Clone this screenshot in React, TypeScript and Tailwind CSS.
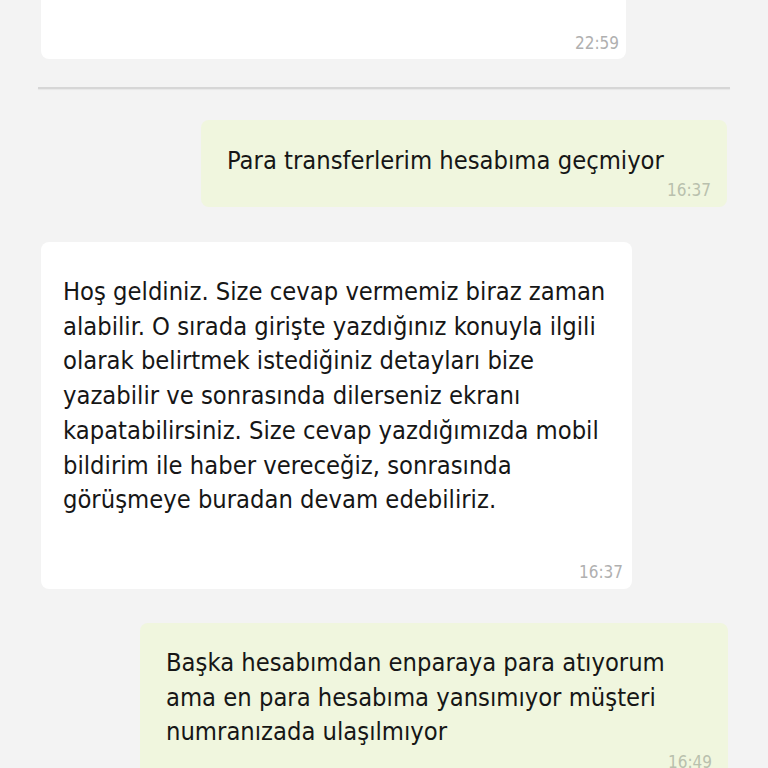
import React from "react";

const font = { fontFamily: '"Liberation Sans Narrow", "DejaVu Sans Condensed", "Liberation Sans", sans-serif' };

function Time({ t, green }: { t: string; green?: boolean }) {
  return (
    <div className={`text-right text-[17px] leading-none ${green ? "text-[#b9c0ad]" : "text-[#b0b0b0]"}`}>{t}</div>
  );
}

export default function App() {
  const incoming = [
    "Hoş geldiniz. Size cevap vermemiz biraz zaman",
    "alabilir. O sırada girişte yazdığınız konuyla ilgili",
    "olarak belirtmek istediğiniz detayları bize",
    "yazabilir ve sonrasında dilerseniz ekranı",
    "kapatabilirsiniz. Size cevap yazdığımızda mobil",
    "bildirim ile haber vereceğiz, sonrasında",
    "görüşmeye buradan devam edebiliriz.",
  ];
  const last = [
    "Başka hesabımdan enparaya para atıyorum",
    "ama en para hesabıma yansımıyor müşteri",
    "numranızada ulaşılmıyor",
  ];

  return (
    <div className="w-[768px] h-[768px] overflow-hidden bg-[#f3f3f3] text-[#161616]" style={font}>
      <div className="flex flex-col">
        {/* previous message, cut off at top */}
        <div className="ml-[41px] w-[585px] h-[80px] -mt-[21px] bg-white rounded-lg flex flex-col justify-end pr-[7px] pb-[7px]">
          <Time t="22:59" />
        </div>

        {/* day divider */}
        <div className="mt-[28px] mx-[38px] h-[2px] bg-[#d6d6d6] shadow-[0_1px_1px_rgba(0,0,0,0.05)]" />

        {/* outgoing */}
        <div className="mt-[31px] ml-[201px] w-[526px] bg-[#f0f6de] rounded-lg pt-[23px] pl-[26px] pr-[16px] pb-[8px]">
          <div className="text-[25.3px] leading-[35px]">Para transferlerim hesabıma geçmiyor</div>
          <div className="mt-[4px]"><Time t="16:37" green /></div>
        </div>

        {/* incoming */}
        <div className="mt-[35px] ml-[41px] w-[591px] bg-white rounded-lg pt-[33px] pl-[22px] pr-[9px] pb-[8px]">
          <div className="text-[25.3px] leading-[34.7px]">
            {incoming.map((l) => (
              <div key={l}>{l}</div>
            ))}
          </div>
          <div className="mt-[46px]"><Time t="16:37" /></div>
        </div>

        {/* outgoing */}
        <div className="mt-[34px] ml-[140px] w-[588px] bg-[#f0f6de] rounded-lg pt-[23px] pl-[26px] pr-[16px] pb-[8px]">
          <div className="text-[25.3px] leading-[34.7px]">
            {last.map((l) => (
              <div key={l}>{l}</div>
            ))}
          </div>
          <div className="mt-[4px]"><Time t="16:49" green /></div>
        </div>
      </div>
    </div>
  );
}
